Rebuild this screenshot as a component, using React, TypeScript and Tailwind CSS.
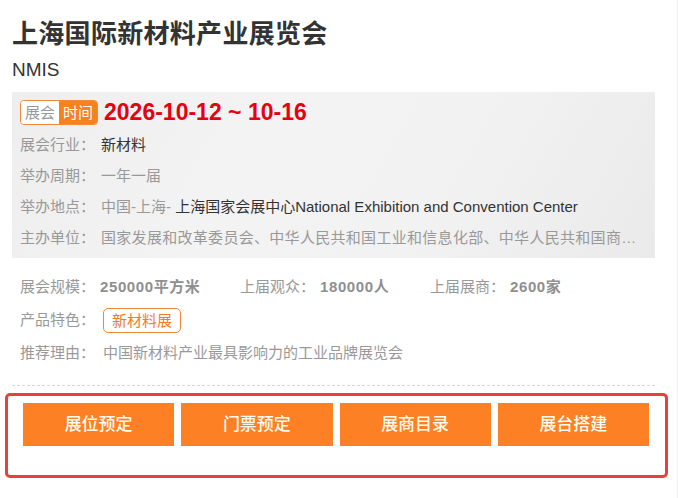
import React from 'react';

const infoRows = [
  { label: '展会行业：', value: <span className="text-[#333]">新材料</span> },
  { label: '举办周期：', value: <span className="text-[#999]">一年一届</span> },
  {
    label: '举办地点：',
    value: (
      <>
        <span className="text-[#999]">中国-上海- </span>
        <span className="text-[#333]">上海国家会展中心National Exhibition and Convention Center</span>
      </>
    ),
  },
  {
    label: '主办单位：',
    value: (
      <span className="text-[#999] tracking-[0.3px]">
        国家发展和改革委员会、中华人民共和国工业和信息化部、中华人民共和国商…
      </span>
    ),
  },
];

const stats = [
  { label: '展会规模：', value: '250000平方米', width: 'w-[220px]' },
  { label: '上届观众：', value: '180000人', width: 'w-[190px]' },
  { label: '上届展商：', value: '2600家', width: 'w-[180px]' },
];

const actions = ['展位预定', '门票预定', '展商目录', '展台搭建'];

export default function App() {
  return (
    <div className="w-[678px] h-[498px] bg-white border-r border-[#eeeeee] font-['Liberation_Sans','Noto_Sans_CJK_SC',sans-serif] overflow-hidden">
      <div className="pl-[12px] pr-[22px] pt-[16px]">
        {/* Title */}
        <h1 className="text-[26px] leading-[36px] font-bold text-[#333] tracking-[0.3px]">上海国际新材料产业展览会</h1>
        <div className="mt-[4px] text-[19px] leading-[28px] text-[#333]">NMIS</div>

        {/* Grey info panel */}
        <div className="mt-[8px] pl-[8px] pr-[6px] pt-[8px] pb-[4px] bg-[linear-gradient(120deg,#eeeeee_0%,#f3f3f3_35%,#f2f2f2_65%,#eaeaea_100%)]">
          <div className="flex items-center h-[25px]">
            <div className="flex h-[25px] border border-[#f08a3a] rounded-[4px] overflow-hidden text-[15px] leading-[23px]">
              <span className="px-[4px] bg-white text-[#999]">展会</span>
              <span className="px-[4px] bg-[#f5821f] text-white">时间</span>
            </div>
            <span className="ml-[6px] text-[23px] leading-[25px] font-bold text-[#e60012]">2026-10-12 ~ 10-16</span>
          </div>
          <div className="mt-[5px]">
            {infoRows.map((row) => (
              <div key={row.label} className="flex items-center h-[31px] text-[15px]">
                <span className="w-[81px] shrink-0 text-[#999]">{row.label}</span>
                <span className="flex-1 min-w-0 whitespace-nowrap">{row.value}</span>
              </div>
            ))}
          </div>
        </div>

        {/* Stats */}
        <div className="mt-[13px] pl-[8px] text-[15px]">
          <div className="flex items-center h-[33px]">
            {stats.map((s) => (
              <div key={s.label} className={`flex items-center ${s.width}`}>
                <span className="w-[80px] shrink-0 text-[#999]">{s.label}</span>
                <span className="font-bold text-[#8f8f8f] tracking-[0.6px]">{s.value}</span>
              </div>
            ))}
          </div>
          <div className="flex items-center h-[33px]">
            <span className="w-[83px] shrink-0 text-[#999]">产品特色：</span>
            <span className="h-[25px] px-[8px] border border-[#f08a3a] rounded-[5px] text-[#f07c2a] text-[15px] leading-[23px]">新材料展</span>
          </div>
          <div className="flex items-center h-[33px]">
            <span className="w-[83px] shrink-0 text-[#999]">推荐理由：</span>
            <span className="text-[#999]">中国新材料产业最具影响力的工业品牌展览会</span>
          </div>
        </div>

        <div className="mt-[15px] border-t border-dashed border-[#d6d6d6]" />
      </div>

      {/* Action buttons */}
      <div className="mt-[7px] ml-[5px] w-[663px] h-[85px] border-[3px] border-[#e93f40] rounded-[5px] pl-[15px] pt-[7px]">
        <div className="grid grid-cols-4 gap-[7px] w-[626px]">
          {actions.map((a) => (
            <button
              key={a}
              className="h-[43px] bg-[#fe8024] text-[#fffbeb] text-[17px] font-medium"
            >
              {a}
            </button>
          ))}
        </div>
      </div>
    </div>
  );
}
